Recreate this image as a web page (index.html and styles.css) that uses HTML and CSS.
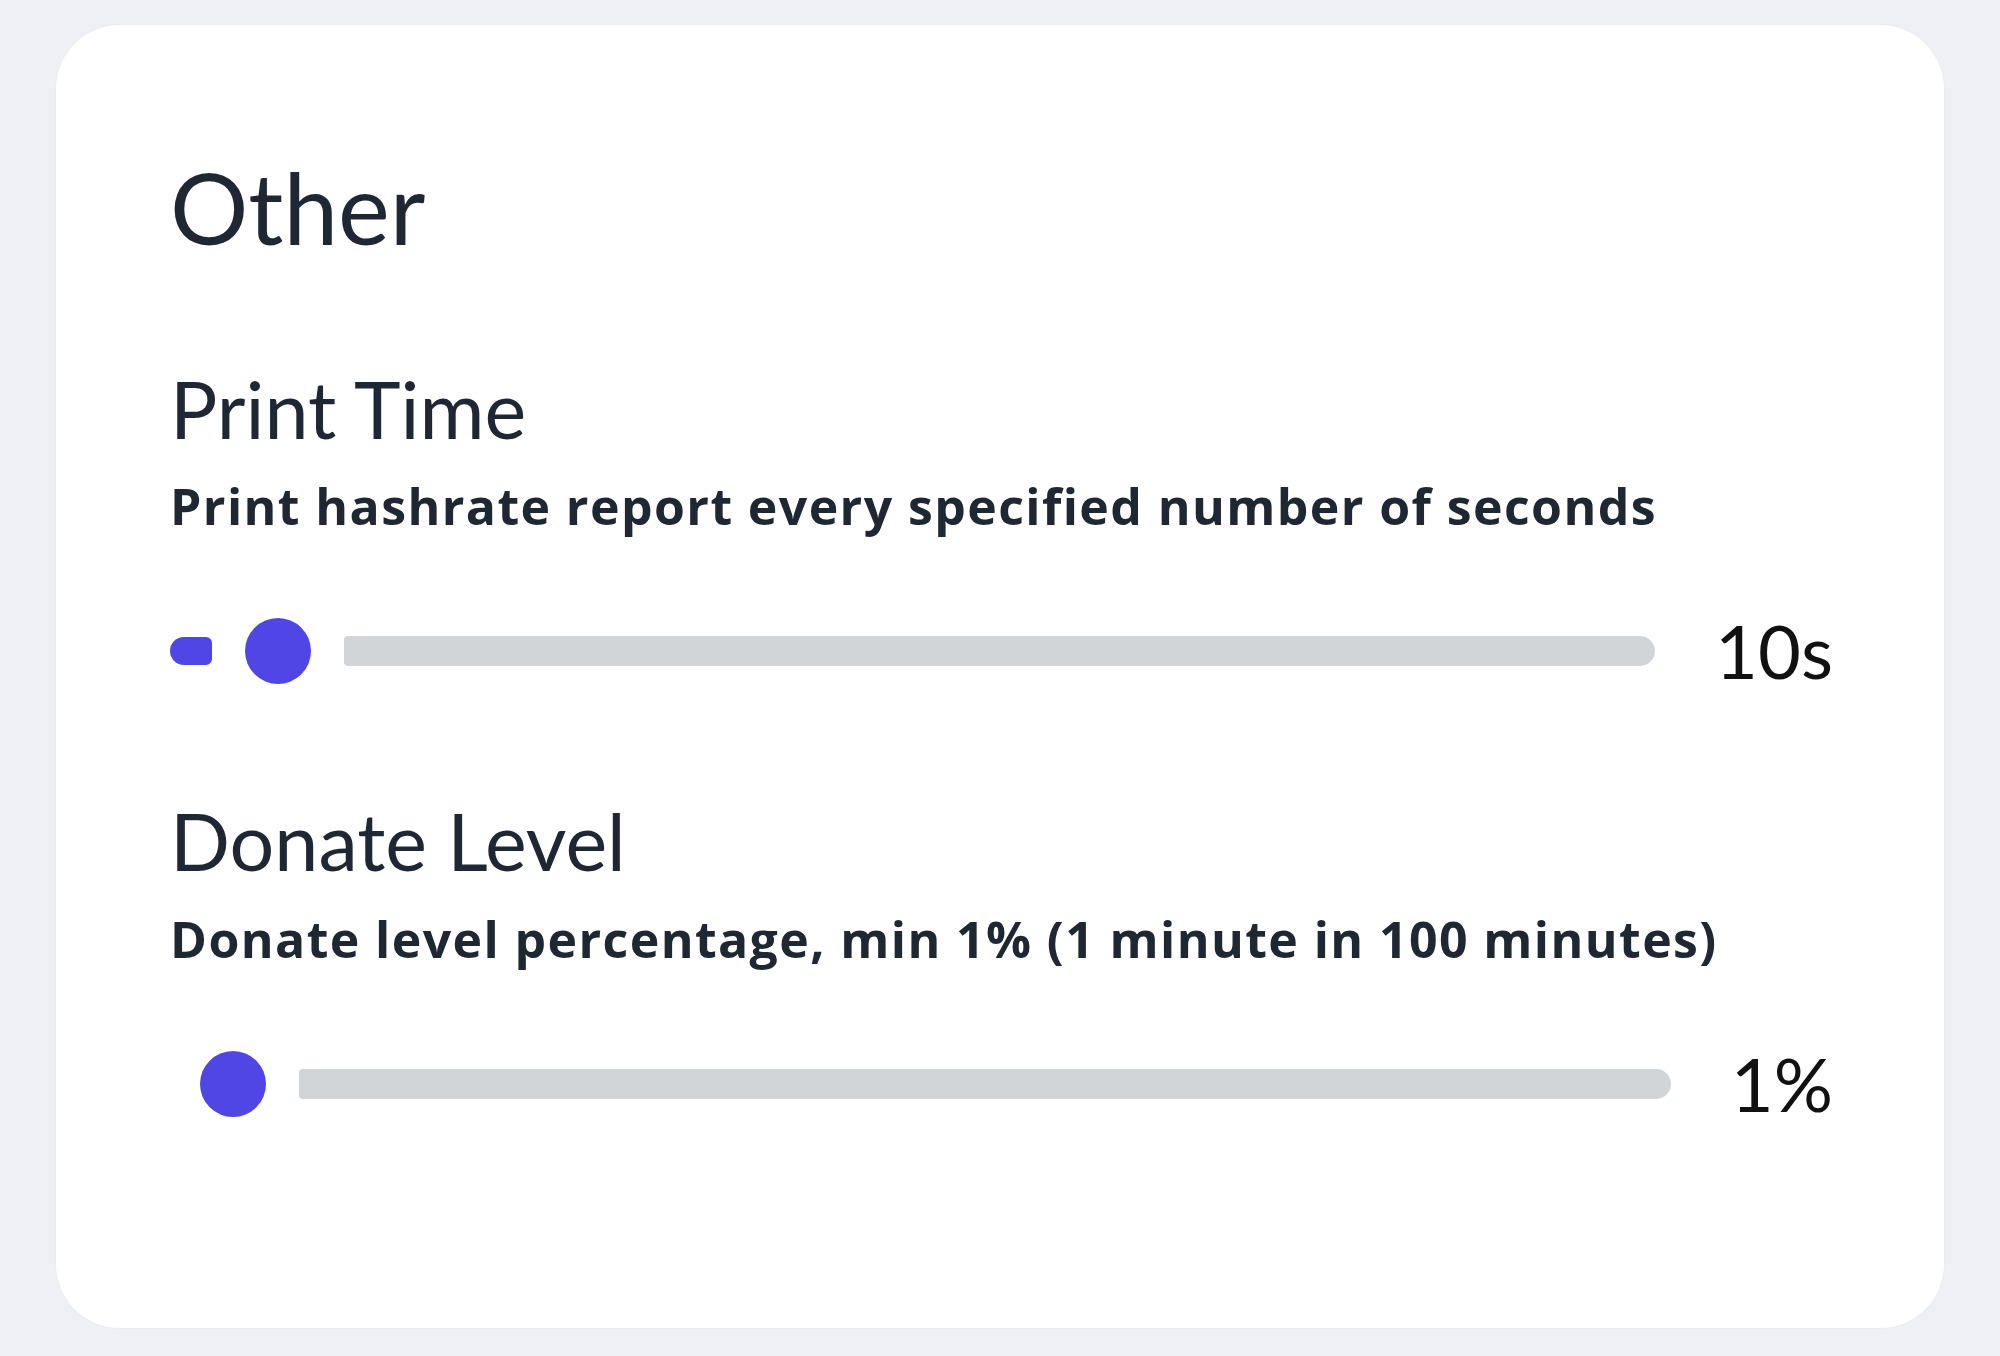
FILE: index.html
```html
<!DOCTYPE html>
<html lang="en">
<head>
    <meta charset="UTF-8">
    <meta name="viewport" content="width=device-width, initial-scale=1.0">
    <title>Other settings</title>
    <link rel="stylesheet" href="styles.css">
</head>
<body>
    <div class="card">
        <h1 class="card-title">Other</h1>

        <div class="setting">
            <h2 class="setting-name">Print Time</h2>
            <p class="setting-desc">Print hashrate report every specified number of seconds</p>
            <div class="slider-row">
                <div class="slider">
                    <div class="fill"></div>
                    <div class="thumb"></div>
                    <div class="track"></div>
                </div>
                <span class="value">10s</span>
            </div>
        </div>

        <div class="setting">
            <h2 class="setting-name">Donate Level</h2>
            <p class="setting-desc">Donate level percentage, min 1% (1 minute in 100 minutes)</p>
            <div class="slider-row">
                <div class="slider at-min">
                    <div class="thumb"></div>
                    <div class="track"></div>
                </div>
                <span class="value">1%</span>
            </div>
        </div>
    </div>
</body>
</html>
```

FILE: styles.css
```css
*, *::after, *::before {
    box-sizing: border-box;
    font-family: 'Lato', 'Open Sans', sans-serif;
}

body {
    margin: 0;
    min-height: 100vh;
    background: #eff0f5;
    padding: 25px 56px 27px 56px;
}

.card {
    background: #ffffff;
    border-radius: 64px;
    padding: 124px 111px 204px 114px;
    box-shadow: 0 0 0 1px rgba(0, 0, 0, 0.015);
}

.card-title {
    margin: 0;
    font-size: 98px;
    line-height: 1.2;
    font-weight: 400;
    color: #1e2733;
}

.setting-name {
    margin: 95px 0 0 0;
    font-size: 79px;
    line-height: 1.2;
    font-weight: 400;
    color: #1e2733;
}

.setting + .setting .setting-name {
    margin-top: 103px;
}

.setting-desc {
    margin: 19px 0 0 0;
    font-family: 'Open Sans', sans-serif;
    font-size: 50px;
    line-height: 62px;
    font-weight: 700;
    letter-spacing: 1.4px;
    color: #1f2733;
}

.slider-row {
    margin-top: 74px;
    height: 80px;
    display: flex;
    align-items: center;
}

.slider {
    flex: 1;
    display: flex;
    align-items: center;
    gap: 33px;
}

.slider.at-min {
    padding-left: 30px;
}

.fill {
    width: 42px;
    height: 28px;
    background: #5046e6;
    border-radius: 14px 6px 6px 14px;
}

.thumb {
    width: 66px;
    height: 66px;
    border-radius: 50%;
    background: #5046e6;
}

.track {
    flex: 1;
    height: 30px;
    background: #d2d5d8;
    border-radius: 4px 15px 15px 4px;
}

.value {
    margin-left: 60px;
    font-size: 74px;
    line-height: 80px;
    color: #111111;
}
```
